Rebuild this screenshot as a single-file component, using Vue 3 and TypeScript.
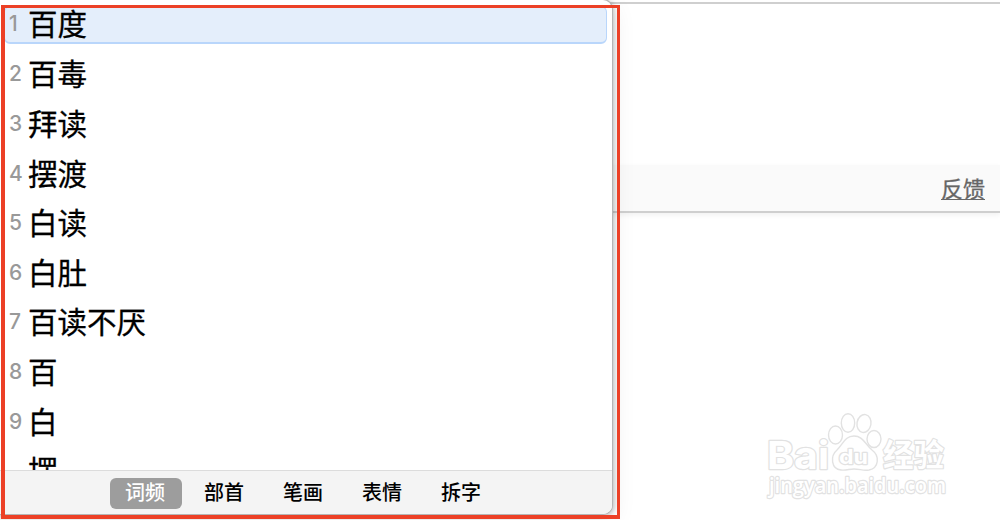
<template>
  <div class="page">
    <div class="top-area"></div>
    <div class="feedback-bar"><a class="feedback">反馈</a></div>

    <svg class="watermark" width="200" height="100" viewBox="0 0 200 100">
      <g class="mark">
        <ellipse cx="85.5" cy="35" rx="7" ry="9" />
        <ellipse cx="98" cy="23" rx="6.7" ry="9.3" />
        <ellipse cx="114" cy="23.5" rx="7" ry="9" transform="rotate(10 114 23.5)" />
        <ellipse cx="124" cy="39" rx="7" ry="8.5" />
        <path d="M104 36C95 36 93 44 87 50C80 56 81 69 91 70C97 70.500 99 69 104 69C110 69 113 71 119 70C129 68 130 56 122 50C115 44 113 36 104 36Z" />
        <text class="latin" x="17" y="68.500" font-size="38" textLength="62" lengthAdjust="spacingAndGlyphs">Bai</text>
        <text class="latin" x="89" y="64" font-size="20" textLength="29" lengthAdjust="spacingAndGlyphs">du</text>
        <text class="cjk" x="133" y="66" font-size="31" textLength="61" lengthAdjust="spacingAndGlyphs">经验</text>
        <text class="url" x="19" y="92.500" font-size="21" textLength="177" lengthAdjust="spacingAndGlyphs">jingyan.baidu.com</text>
      </g>
    </svg>

    <div class="panel">
      <div class="list">
        <div v-for="(word, i) in words" :key="i" :class="['row', { selected: i === 0 }]">
          <span class="num">{{ i < 9 ? i + 1 : '' }}</span>
          <span class="word">{{ word }}</span>
        </div>
      </div>
      <div class="tabs">
        <span v-for="tab in tabs" :key="tab" :class="['tab', { active: tab === active }]" @click="active = tab">{{ tab }}</span>
      </div>
    </div>
    <div class="frame"></div>
  </div>
</template>

<script setup lang="ts">
import { ref } from 'vue'

const words: string[] = ['百度', '百毒', '拜读', '摆渡', '白读', '白肚', '百读不厌', '百', '白', '摆']
const tabs: string[] = ['词频', '部首', '笔画', '表情', '拆字']
const active = ref('词频')
</script>

<style>
body { margin: 0; background: #fff; }
</style>

<style scoped>
.page {
  position: relative; width: 1000px; height: 520px; overflow: hidden; background: #fff;
  font-family: "Noto Sans CJK SC", sans-serif;
}
.top-area { height: 165px; box-sizing: border-box; border-top: 2px solid #fff; box-shadow: inset 0 2px 0 #cfcfcf; }
.feedback-bar {
  display: flex; align-items: center; justify-content: flex-end;
  height: 48px; box-sizing: border-box; padding: 0 15px 1px 0;
  background: #fafafa; border-bottom: 2px solid #cfcfcf;
  box-shadow: 0 2px 5px rgba(0,0,0,0.06);
}
.feedback {
  font-size: 22px; line-height: 23px; color: #666; -webkit-text-stroke: 0.3px #666;
  border-bottom: 1px solid #666;
}

.panel {
  position: absolute; left: -8px; top: 0; width: 620px; height: 514px;
  box-sizing: border-box; padding-left: 8px;
  display: flex; flex-direction: column; overflow: hidden;
  background: #fff; border-radius: 9px;
  box-shadow: 0 0 0 1px #b5b5b5, 1px 1px 5px 1px rgba(0,0,0,0.24), 0 7px 24px rgba(0,0,0,0.1);
}
.list { height: 470px; box-sizing: border-box; padding: 6px 5px 0 4px; overflow: hidden; }
.row {
  display: flex; align-items: center; height: 37.6px; margin-bottom: 12px;
  box-sizing: border-box; padding-left: 4px; border: 1px solid transparent;
}
.selected { background: #e4eefb; border: 1px solid #b9d6fb; border-bottom-width: 2px; border-radius: 6px; }
.num { width: 19px; font: 500 21px/30px Inter, sans-serif; color: #999; letter-spacing: -0.5px; }
.word {
  margin-top: -4px; font-size: 29.5px; line-height: 36px; color: #000; white-space: nowrap;
  -webkit-text-stroke: 0.3px #000;
}

.tabs {
  display: flex; gap: 7px; height: 44px; box-sizing: border-box;
  margin-left: -8px; padding: 7px 0 0 118px;
  background: #f4f4f4; border-top: 1px solid #dcdcdc;
}
.tab {
  width: 72px; height: 31px; box-sizing: border-box; padding-right: 2px;
  line-height: 28px; text-align: center;
  font-size: 20px; font-weight: 500; color: #000; border-radius: 6px;
}
.active { color: #fff; background: #9d9d9d; }

.frame {
  position: absolute; left: 1px; top: 5px; width: 619px; height: 514px;
  box-sizing: border-box; border: 3px solid #ec4026; border-left-width: 4px; border-bottom-width: 4px;
}

.watermark { position: absolute; left: 750px; top: 400px; }
.mark { fill: #fff; stroke: #e2e2e2; stroke-width: 1.4; }
.mark text { paint-order: stroke; stroke-width: 2.4; stroke-linejoin: round; }
.latin { font-family: Inter, sans-serif; font-weight: 700; }
.cjk { font-family: "Noto Sans CJK SC", sans-serif; font-weight: 700; }
.url { font-family: "Open Sans", sans-serif; font-weight: 600; }
</style>
